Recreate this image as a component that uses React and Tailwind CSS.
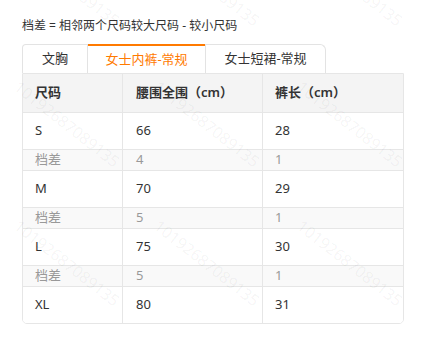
import React from 'react';

const rows = [
  { size: 'S', waist: '66', len: '28' },
  { diff: true, waist: '4', len: '1' },
  { size: 'M', waist: '70', len: '29' },
  { diff: true, waist: '5', len: '1' },
  { size: 'L', waist: '75', len: '30' },
  { diff: true, waist: '5', len: '1' },
  { size: 'XL', waist: '80', len: '31' },
];

const marks = [];
[-17, 124, 263].forEach((y) => [67, 207, 350].forEach((x) => marks.push({ x, y })));

export default function App() {
  return (
    <div className="relative w-[426px] h-[342px] overflow-hidden bg-white text-[#333] font-['Noto_Sans','Noto_Sans_CJK_SC',sans-serif]">
      <div className="pl-[22px] pt-[17px]">
        <p className="text-[12px] leading-[18px] text-[#333]">档差 = 相邻两个尺码较大尺码 - 较小尺码</p>

        <div className="mt-[9px] flex h-[29px] text-[13px]">
          <div className="w-[66px] flex items-center justify-center border border-b-0 border-[#e3e3e3] rounded-tl-[4px] bg-white">文胸</div>
          <div className="w-[117px] flex items-center justify-center border-t-2 border-[#ff7a00] text-[#ff7a00] bg-white">女士内裤-常规</div>
          <div className="w-[121px] flex items-center justify-center border border-b-0 border-[#e3e3e3] rounded-tr-[6px] bg-white">女士短裙-常规</div>
        </div>

        <div className="w-[382px] border border-[#e6e6e6] rounded-b-[5px] overflow-hidden text-[13px]">
          <div className="grid grid-cols-[100px_140px_1fr] h-[38px] bg-[#f4f4f4] font-semibold">
            <div className="flex items-center pl-[12px] border-r border-[#e6e6e6]">尺码</div>
            <div className="flex items-center pl-[13px] border-r border-[#e6e6e6]">腰围全围（cm）</div>
            <div className="flex items-center pl-[12px]">裤长（cm）</div>
          </div>
          {rows.map((r, i) =>
            r.diff ? (
              <div key={i} className="grid grid-cols-[100px_140px_1fr] h-[21px] border-t border-[#e6e6e6] bg-[#f9f9f9] text-[#999]">
                <div className="flex items-center pl-[12px] border-r border-[#e6e6e6]">档差</div>
                <div className="flex items-center pl-[13px] border-r border-[#e6e6e6]">{r.waist}</div>
                <div className="flex items-center pl-[12px]">{r.len}</div>
              </div>
            ) : (
              <div key={i} className="grid grid-cols-[100px_140px_1fr] h-[37px] border-t border-[#e6e6e6] bg-white">
                <div className="flex items-center pl-[12px] border-r border-[#e6e6e6]">{r.size}</div>
                <div className="flex items-center pl-[13px] border-r border-[#e6e6e6]">{r.waist}</div>
                <div className="flex items-center pl-[12px]">{r.len}</div>
              </div>
            )
          )}
        </div>
      </div>

      {marks.map((m, i) => (
        <span
          key={i}
          className="pointer-events-none absolute -translate-x-1/2 -translate-y-1/2 rotate-[38deg] text-[16px] whitespace-nowrap text-black/[0.05]"
          style={{ left: m.x, top: m.y }}
        >
          10192687089135
        </span>
      ))}
    </div>
  );
}
